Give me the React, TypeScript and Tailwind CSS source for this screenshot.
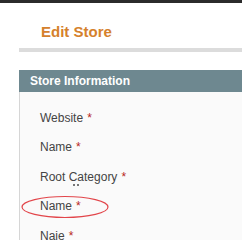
export default function App() {
  const rows = ["Website", "Name", "Root Category", "Name", "Naje"]

  return (
    <div className="w-[242px] h-[240px] overflow-hidden bg-white" style={{ fontFamily: '"Liberation Sans", Arial, sans-serif' }}>
      {/* Top dark strip */}
      <div className="h-[3px] bg-[#2b2b2b]" />

      <div className="pl-[19px]">
        {/* Page title */}
        <div className="pt-[20px] pl-[22px] h-[45px]">
          <h1 className="text-[15px] leading-[18px] font-bold text-[#d5812c]">Edit Store</h1>
        </div>
        <div className="h-[4px] bg-[#dcdcdc]" />

        {/* Fieldset */}
        <div className="mt-[18px]">
          <div className="h-[22px] bg-[#6e8890] pl-[11px] text-[12px] leading-[22px] font-bold text-white">
            Store Information
          </div>
          <div className="relative h-[200px] bg-[#fafafa] border-l border-[#d6d6d6] pt-[11px] pl-[20px]">
            {rows.map((label, i) => (
              <div key={i} className="h-[29.5px] flex items-center text-[12px] text-[#444]">
                <span>{label}</span>
                <span className="ml-[4px] text-[#b8261b]">*</span>
              </div>
            ))}

            {/* Cursor marks under "Category" */}
            <span className="absolute left-[53px] top-[92px] w-[2px] h-[2px] bg-[#777]" />
            <span className="absolute left-[57px] top-[92px] w-[2px] h-[2px] bg-[#777]" />

            {/* Red annotation ellipse */}
            <svg className="absolute left-[1px] top-[103px]" width="88" height="24" viewBox="0 0 88 24">
              <ellipse cx="44" cy="12" rx="43" ry="10.5" fill="none" stroke="#e2454a" strokeWidth="1.2" />
            </svg>
          </div>
        </div>
      </div>
    </div>
  )
}
